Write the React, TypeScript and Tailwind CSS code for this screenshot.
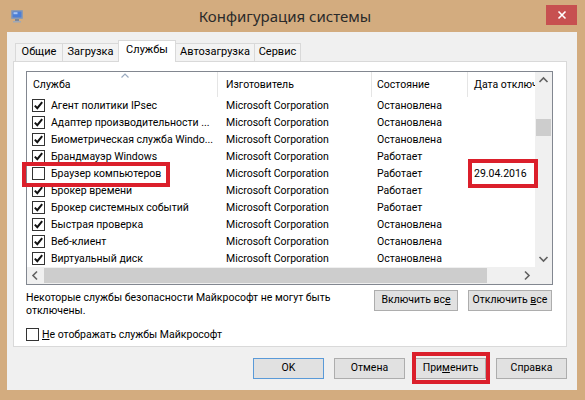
import React from "react";

type Row = { name: string; vendor: string; state: string; date?: string; on: boolean };

const rows: Row[] = [
  { name: "Агент политики IPsec", vendor: "Microsoft Corporation", state: "Остановлена", on: true },
  { name: "Адаптер производительности ...", vendor: "Microsoft Corporation", state: "Остановлена", on: true },
  { name: "Биометрическая служба Windo...", vendor: "Microsoft Corporation", state: "Остановлена", on: true },
  { name: "Брандмауэр Windows", vendor: "Microsoft Corporation", state: "Работает", on: true },
  { name: "Браузер компьютеров", vendor: "Microsoft Corporation", state: "Работает", date: "29.04.2016", on: false },
  { name: "Брокер времени", vendor: "Microsoft Corporation", state: "Работает", on: true },
  { name: "Брокер системных событий", vendor: "Microsoft Corporation", state: "Работает", on: true },
  { name: "Быстрая проверка", vendor: "Microsoft Corporation", state: "Остановлена", on: true },
  { name: "Веб-клиент", vendor: "Microsoft Corporation", state: "Остановлена", on: true },
  { name: "Виртуальный диск", vendor: "Microsoft Corporation", state: "Остановлена", on: true },
];

const tabs = [
  { label: "Общие", w: "w-[48px]" },
  { label: "Загрузка", w: "w-[57px]" },
  { label: "Службы", w: "w-[58px]" },
  { label: "Автозагрузка", w: "w-[80px]" },
  { label: "Сервис", w: "w-[47px]" },
];

function Check({ on }: { on: boolean }) {
  return (
    <span className="flex h-[13px] w-[13px] shrink-0 items-center justify-center border border-[#333] bg-white">
      {on && (
        <svg width="11" height="11" viewBox="0 0 11 11">
          <path d="M1.8 5.6 L4.3 8.2 L9.2 2.2" fill="none" stroke="#111" strokeWidth="2" />
        </svg>
      )}
    </span>
  );
}

function Chevron({ dir }: { dir: "up" | "down" | "left" | "right" }) {
  const d = {
    up: "M4.5 10 L8.5 6 L12.5 10",
    down: "M4.5 7 L8.5 11 L12.5 7",
    left: "M10 4.5 L6 8.5 L10 12.5",
    right: "M7 4.5 L11 8.5 L7 12.5",
  }[dir];
  return (
    <svg width="17" height="17" viewBox="0 0 17 17">
      <path d={d} fill="none" stroke="#606060" strokeWidth="1.6" />
    </svg>
  );
}

function Btn({ children, w, primary }: { children: React.ReactNode; w: string; primary?: boolean }) {
  return (
    <button
      className={`${w} h-[21px] whitespace-nowrap border ${primary ? "border-[#5a9ad8]" : "border-[#adadad]"} bg-[#e1e1e1] leading-none text-[#000]`}
    >
      {children}
    </button>
  );
}

export default function App() {
  return (
    <div
      className="relative h-[400px] w-[585px] overflow-hidden bg-[#d3ac7f] text-[10.5px] text-[#000]"
      style={{ fontFamily: 'Roboto, "Noto Sans", sans-serif' }}
    >
      {/* title bar */}
      <div className="relative flex h-[32px] items-center">
        <svg className="ml-[10px]" width="14" height="14" viewBox="0 0 14 14">
          <rect x="1" y="1" width="12" height="9" rx="1" fill="#8e9bb0" />
          <rect x="2.5" y="2.5" width="9" height="6" fill="#4d7fd6" />
          <rect x="3.5" y="3.2" width="4" height="2" fill="#a9c6f5" />
          <rect x="5" y="10" width="4" height="2" fill="#7b8698" />
          <rect x="3" y="12" width="8" height="1.5" fill="#a0a8b6" />
        </svg>
        <div
          className="flex-1 text-center text-[15px] text-[#2a2a2a]"
          style={{ fontFamily: '"Noto Sans", sans-serif' }}
        >
          Конфигурация системы
        </div>
        <div className="mr-[8px] mt-[-2px] flex h-[20px] w-[31px] items-center justify-center bg-[#c75050]">
          <svg width="10" height="10" viewBox="0 0 10 10">
            <path d="M1.5 1.5 L8.5 8.5 M8.5 1.5 L1.5 8.5" stroke="#fff" strokeWidth="1.6" />
          </svg>
        </div>
      </div>

      {/* client */}
      <div className="mx-[7px] flex h-[358px] w-[570px] flex-col bg-[#f0f0f0] pl-[6px] pr-[10px] pt-[8px]">
        <div className="flex h-[21px] items-end pl-[2px]">
          {tabs.map((t) => {
            const sel = t.label === "Службы";
            return (
              <div
                key={t.label}
                className={`${t.w} -mr-px flex items-center justify-center border border-b-0 border-[#d9d9d9] text-[11px] ${
                  sel ? "relative z-10 -mb-px h-[22px] bg-white pb-[3px]" : "h-[18px] bg-[#f3f3f3]"
                }`}
              >
                {t.label}
              </div>
            );
          })}
        </div>

        <div className="flex h-[286px] flex-col border border-[#d9d9d9] bg-white pl-[12px] pr-[13px] pt-[9px]">
          {/* list */}
          <div className="flex h-[214px] flex-col border border-[#828790]">
            <div className="flex min-h-0 flex-1">
              <div className="flex-1 overflow-hidden">
                <div className="grid h-[25px] grid-cols-[191px_154px_96px_68px]">
                  <div className="relative flex items-center border-r border-[#e5e5e5] pl-[6px]">
                    Служба
                    <svg className="absolute left-[94px] top-[1px]" width="8" height="5" viewBox="0 0 8 5">
                      <path d="M0.5 4.5 L4 1 L7.5 4.5" fill="none" stroke="#9aaabf" strokeWidth="1.2" />
                    </svg>
                  </div>
                  <div className="flex items-center border-r border-[#e5e5e5] pl-[8px]">Изготовитель</div>
                  <div className="flex items-center border-r border-[#e5e5e5] pl-[5px]">Состояние</div>
                  <div className="flex items-center overflow-hidden whitespace-nowrap pl-[6px]">Дата отключения</div>
                </div>
                {rows.map((r) => (
                  <div key={r.name} className="grid h-[17px] grid-cols-[191px_154px_96px_68px] items-center">
                    <div className="flex items-center gap-[6px] overflow-hidden whitespace-nowrap pl-[5px]">
                      <Check on={r.on} />
                      {r.name}
                    </div>
                    <div className="whitespace-nowrap pl-[8px]">{r.vendor}</div>
                    <div className="whitespace-nowrap pl-[5px]">{r.state}</div>
                    <div className="overflow-hidden whitespace-nowrap pl-[6px]">{r.date}</div>
                  </div>
                ))}
              </div>
              <div className="flex w-[17px] flex-col bg-[#f0f0f0]">
                <Chevron dir="up" />
                <div className="flex-1 pt-[30px]">
                  <div className="mx-[1px] h-[17px] bg-[#cdcdcd]" />
                </div>
                <Chevron dir="down" />
              </div>
            </div>
            <div className="flex h-[17px]">
              <div className="flex flex-1 items-center bg-[#f0f0f0]">
                <Chevron dir="left" />
                <div className="h-[15px] w-[443px] bg-[#cdcdcd]" />
                <div className="flex-1" />
                <Chevron dir="right" />
              </div>
              <div className="w-[17px] bg-[#f0f0f0]" />
            </div>
          </div>

          <div className="mt-[5px] flex items-start justify-between pr-px">
            <p className="mt-[1px] w-[325px] leading-[13px]">
              Некоторые службы безопасности Майкрософт не могут быть отключены.
            </p>
            <div className="flex gap-[10px]">
              <Btn w="w-[84px]">
                Включить вс<span className="underline">е</span>
              </Btn>
              <Btn w="w-[84px]">
                Отключить <span className="underline">в</span>се
              </Btn>
            </div>
          </div>

          <div className="mt-[10px] flex items-center gap-[3px]">
            <span className="h-[13px] w-[13px] border border-[#333] bg-white" />
            <span>
              <span className="underline">Н</span>е отображать службы Майкрософт
            </span>
          </div>
        </div>

        <div className="mt-[11px] flex justify-end gap-[10px]">
          <Btn w="w-[71px]" primary>
            OK
          </Btn>
          <Btn w="w-[71px]">Отмена</Btn>
          <Btn w="w-[71px]">
            При<span className="underline">м</span>енить
          </Btn>
          <Btn w="w-[71px]">Справка</Btn>
        </div>
      </div>

      {/* red annotation boxes */}
      <div className="absolute left-[22px] top-[162px] h-[25px] w-[148px] border-[4px] border-[#db1f2b]" />
      <div className="absolute left-[468px] top-[159px] h-[29px] w-[70px] border-[4px] border-[#db1f2b]" />
      <div className="absolute left-[412px] top-[352px] h-[32px] w-[78px] border-[4px] border-[#db1f2b]" />
    </div>
  );
}
